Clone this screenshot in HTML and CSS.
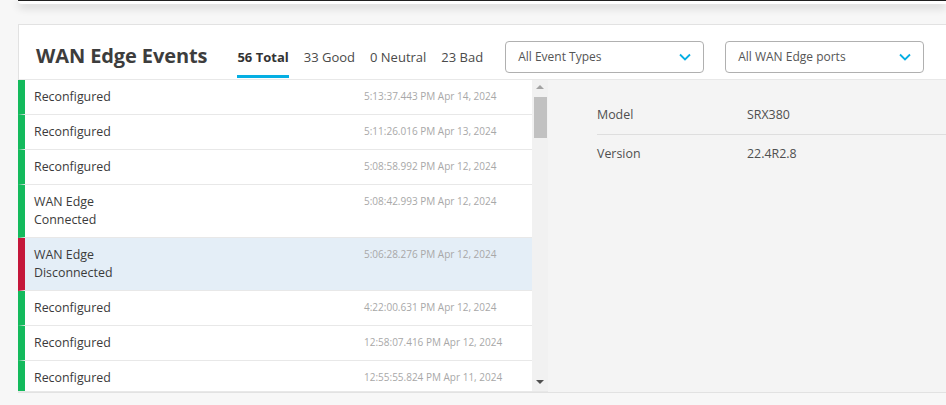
FILE: index.html
```html
<!doctype html>
<html lang="en">
<head>
 <meta charset="utf-8" />
 <meta name="viewport" content="width=device-width, initial-scale=1" />
 <title>WAN Edge Events</title>
 <link rel="stylesheet" href="styles.css">
</head>
<body>
 <div class="topbar"></div>

 <section class="card">
 <header class="head">
 <h2>WAN Edge Events</h2>
 <nav class="tabs">
 <span class="tab active">56 Total</span>
 <span class="tab">33 Good</span>
 <span class="tab">0 Neutral</span>
 <span class="tab">23 Bad</span>
 </nav>
 <div class="select">
 <span>All Event Types</span>
 <svg class="chev" width="12" height="8" viewBox="0 0 12 8"><path d="M1 1.5l5 5 5-5" fill="none" stroke="currentColor" stroke-width="1.8"/></svg>
 </div>
 <div class="select">
 <span>All WAN Edge ports</span>
 <svg class="chev" width="12" height="8" viewBox="0 0 12 8"><path d="M1 1.5l5 5 5-5" fill="none" stroke="currentColor" stroke-width="1.8"/></svg>
 </div>
 </header>

 <div class="body">
 <div class="events">
 <ul class="list" id="list"></ul>
 <div class="scroll">
 <span class="arrow up"></span>
 <span class="thumb"></span>
 <span class="arrow down"></span>
 </div>
 </div>

 <div class="details">
 <div class="drow"><span class="key">Model</span><span>SRX380</span></div>
 <div class="drow"><span class="key">Version</span><span>22.4R2.8</span></div>
 </div>
 </div>
 </section>

 <script>
 const events = [
 { name: "Reconfigured", time: "5:13:37.443 PM Apr 14, 2024", type: "good" },
 { name: "Reconfigured", time: "5:11:26.016 PM Apr 13, 2024", type: "good" },
 { name: "Reconfigured", time: "5:08:58.992 PM Apr 12, 2024", type: "good" },
 { name: "WAN Edge Connected", time: "5:08:42.993 PM Apr 12, 2024", type: "good" },
 { name: "WAN Edge Disconnected", time: "5:06:28.276 PM Apr 12, 2024", type: "bad", selected: true },
 { name: "Reconfigured", time: "4:22:00.631 PM Apr 12, 2024", type: "good" },
 { name: "Reconfigured", time: "12:58:07.416 PM Apr 12, 2024", type: "good" },
 { name: "Reconfigured", time: "12:55:55.824 PM Apr 11, 2024", type: "good" }
 ];

 const list = document.getElementById('list');
 events.forEach(ev => {
 const li = document.createElement('li');
 li.className = 'event ' + ev.type + (ev.selected ? ' selected' : '');
 const name = document.createElement('span');
 name.className = 'name';
 name.textContent = ev.name;
 const time = document.createElement('span');
 time.className = 'time';
 time.textContent = ev.time;
 li.append(name, time);
 list.appendChild(li);
 });
 </script>
</body>
</html>
```

FILE: styles.css
```css
:root{
--text:#3b3b3b;
--muted:#a8a8a8;
--line:#e8e8e8;
--green:#13ba5c;
--red:#c4173a;
--blue:#05afe3;
--pane:#f4f4f4;
}
*{box-sizing:border-box}
body{
margin:0;
background:#f7f7f7;
font-family:"Open Sans",Roboto,Arial,sans-serif;
color:var(--text);
overflow:hidden;
}
.topbar{
margin-left:18px;
height:4px;
background:#fff;
border-top:1px solid #1f1f1f;
border-radius:0 0 0 4px;
box-shadow:0 3px 8px rgba(0,0,0,.22);
}
.card{
margin:20px 0 0 18px;
height:369px;
background:#fff;
border:1px solid #e2e2e2;
border-right:0;
display:flex;
flex-direction:column;
}
.head{
height:55px;
flex:none;
display:flex;
align-items:center;
padding:9px 0 0 17px;
border-bottom:1px solid var(--line);
}
.head h2{
margin:0 30px 2px 0;
font-size:20px;
font-weight:700;
letter-spacing:-.1px;
color:#3d3d3d;
}
.tabs{display:flex; gap:15px; align-self:stretch; align-items:flex-end; margin-right:22px}
.tab{
font-size:13px;
line-height:18px;
padding-bottom:9px;
border-bottom:3px solid transparent;
margin-bottom:1px;
color:#4a4a4a;
}
.tab.active{font-weight:700; border-color:var(--blue); color:#333}
.select{
width:199px;
height:32px;
margin-right:21px;
display:flex;
align-items:center;
justify-content:space-between;
padding:0 12px 0 12px;
border:1px solid #b0b0b0;
border-radius:4px;
font-size:12px;
color:#555;
}
.chev{color:var(--blue)}

.body{flex:1; display:flex; min-height:0}
.events{width:530px; display:flex; margin-left:-1px; border-bottom:1px solid var(--line)}
.list{margin:0; padding:0; list-style:none; flex:1; overflow:hidden}
.event{
display:flex;
align-items:flex-start;
padding:8px 0 8px 9px;
border-left:7px solid var(--green);
border-bottom:1px solid var(--line);
}
.event.bad{border-left-color:var(--red)}
.event.selected{background:#e4eef7}
.name{flex:0 0 330px; font-size:12.4px; line-height:18px; padding-right:230px}
.time{font-size:10px; line-height:17px; color:var(--muted)}

.scroll{
width:16px;
flex:none;
background:#f1f1f1;
display:flex;
flex-direction:column;
align-items:center;
padding:5px 0 0;
}
.arrow{width:0; height:0; border-left:4px solid transparent; border-right:4px solid transparent}
.arrow.up{border-bottom:4px solid #a3a3a3}
.arrow.down{border-top:4px solid #505050; margin-top:auto; margin-bottom:7px}
.thumb{width:13px; height:41px; background:#c1c1c1; margin-top:8px; margin-left:1px}

.details{flex:1; background:var(--pane); padding:16px 0 0 49px}
.drow{
display:flex;
font-size:12.4px;
line-height:18px;
padding:10px 0 11px;
color:#4f4f4f;
}
.drow:first-child{border-bottom:1px solid #dedede; padding-bottom:10px}
.drow + .drow{padding-top:10px}
.key{flex:0 0 150px}
```
